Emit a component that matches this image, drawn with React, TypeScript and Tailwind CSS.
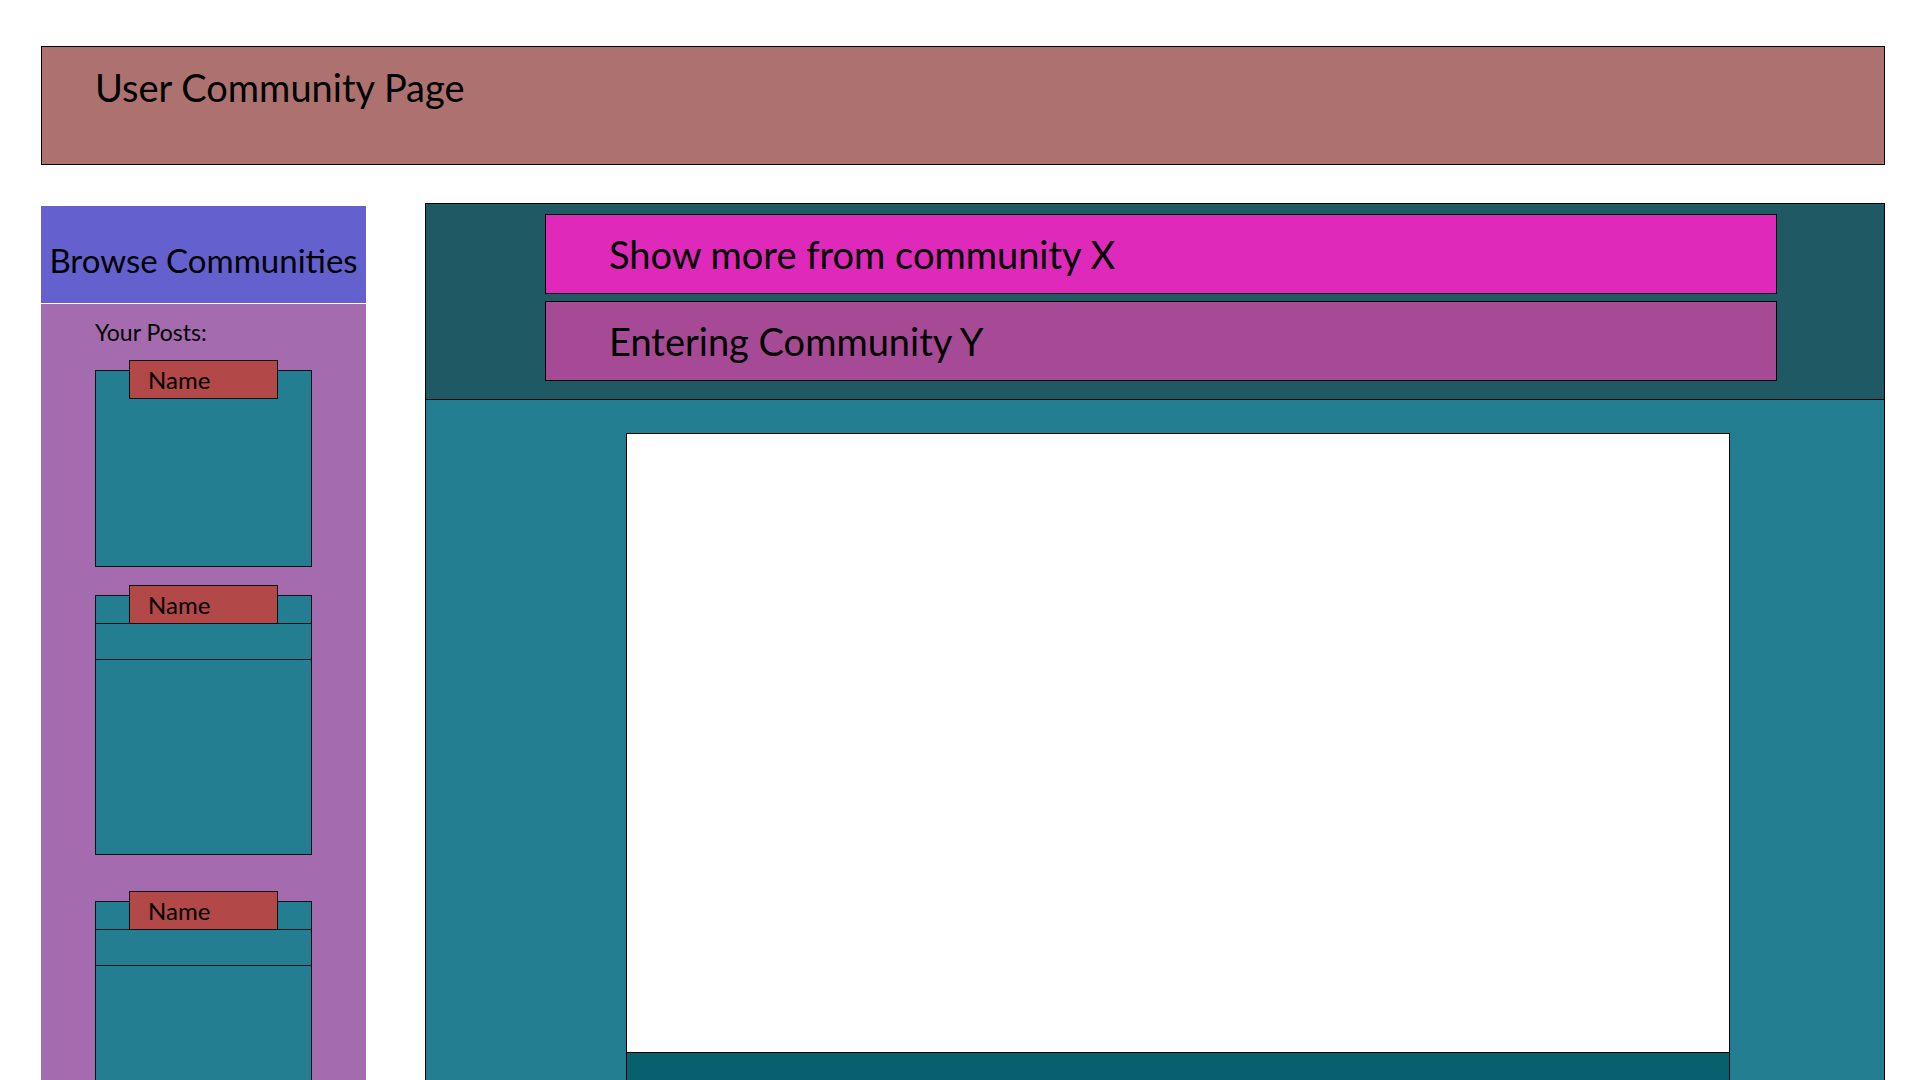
const font = { fontFamily: 'Lato, "Open Sans", sans-serif' };

interface PostCardProps {
  height: string;
  rows?: boolean;
}

function PostCard({ height, rows }: PostCardProps) {
  return (
    <div className={`relative w-[217px] ${height} bg-[#237e91] border border-[#111]`}>
      {/* Name tab */}
      <div className="absolute -top-[11px] left-[33px] w-[149px] h-[39px] bg-[#b24848] border border-[#111] flex items-center pl-[18px]">
        <span className="text-[24px] leading-none text-black">Name</span>
      </div>
      {rows && (
        <div className="flex flex-col">
          <div className="h-[28px] border-b border-[#111]" />
          <div className="h-[36px] border-b border-[#111]" />
        </div>
      )}
    </div>
  );
}

export default function App() {
  return (
    <div className="h-screen overflow-hidden bg-white pt-[46px] pl-[41px] pr-[35px]" style={font}>
      {/* Page header */}
      <header className="h-[119px] bg-[#ad7270] border-[1.5px] border-black pl-[53px] pt-[21px]">
        <h1 className="text-[38px] leading-none text-black">User Community Page</h1>
      </header>

      <div className="flex items-start gap-[59px] mt-[38px]">
        {/* Sidebar */}
        <aside className="w-[325px] shrink-0 mt-[3px] flex flex-col">
          <div className="h-[97px] bg-[#6461cf] flex justify-center pt-[38px]">
            <span className="text-[33px] leading-none text-black whitespace-nowrap">Browse Communities</span>
          </div>
          <div className="h-px bg-white" />
          <div className="h-[800px] bg-[#a46baf] pl-[54px] pt-[17px]">
            <p className="text-[23px] leading-none text-black">Your Posts:</p>
            <div className="flex flex-col mt-[26px]">
              <PostCard height="h-[197px]" />
              <div className="mt-[28px]">
                <PostCard height="h-[260px]" rows />
              </div>
              <div className="mt-[46px]">
                <PostCard height="h-[260px]" rows />
              </div>
            </div>
          </div>
        </aside>

        {/* Main feed */}
        <main className="flex-1 border border-black">
          <div className="h-[196px] bg-[#1f5964] border-b border-black pl-[119px] pr-[107px] pt-[10px] flex flex-col gap-[7px]">
            <button className="h-[80px] bg-[#de29ba] border border-black flex items-center pl-[63px] text-[38px] leading-none text-black">
              Show more from community X
            </button>
            <button className="h-[80px] bg-[#a64a96] border border-black flex items-center pl-[63px] text-[38px] leading-none text-black">
              Entering Community Y
            </button>
          </div>
          <div className="h-[800px] bg-[#237e91] pl-[200px] pr-[154px] pt-[33px]">
            <div className="h-[620px] bg-white border border-black" />
            <div className="h-[200px] bg-[#08606f] border-x border-black" />
          </div>
        </main>
      </div>
    </div>
  );
}
